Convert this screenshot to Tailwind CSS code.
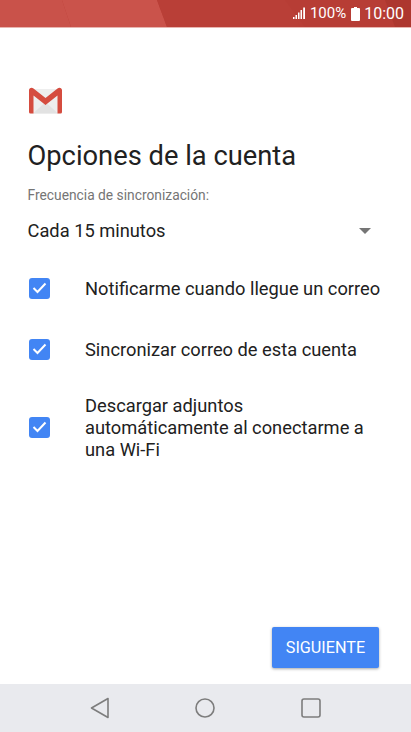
<!DOCTYPE html>
<html lang="es">
  <head>
    <meta charset="UTF-8" />
    <meta name="viewport" content="width=device-width, initial-scale=1.0" />
    <title>Opciones de la cuenta</title>
    <script src="https://cdn.jsdelivr.net/npm/@tailwindcss/browser@4"></script>
  </head>
  <body class="bg-white">
    <div class="w-[411px] h-[732px] flex flex-col overflow-hidden font-['Roboto',sans-serif] text-[#212121]">
      <!-- status bar -->
      <div class="relative h-[28px] shrink-0 bg-[#b93f37] border-b border-[#e8b5b0]">
        <svg class="absolute inset-0" width="411" height="27" viewBox="0 0 411 27">
          <polygon points="0,0 62,0 71,27 0,27" fill="#c9524a" />
          <polygon points="62,0 157,0 167,27 71,27" fill="#ca534b" />
          <polygon points="157,0 290,0 300,27 167,27" fill="#b93f37" />
          <polygon points="285,0 411,0 411,27 305,27" fill="#b73d35" />
          <polygon points="385,0 411,0 411,27 395,27" fill="#ad372f" />
        </svg>
        <div class="relative flex items-center justify-end h-[27px] pr-[7px] text-white text-[15px] leading-none">
          <svg class="mr-[5px]" width="12" height="13" viewBox="0 0 12 13" fill="#fff">
            <rect x="0" y="10" width="1.500" height="2" />
            <rect x="2.500" y="8" width="1.500" height="4" />
            <rect x="5" y="5.500" width="1.500" height="6.500" />
            <rect x="7.500" y="3" width="1.500" height="9" />
            <rect x="10.200" y="0.500" width="1.800" height="11.500" />
          </svg>
          <span>100%</span>
          <svg class="ml-[5px] mr-[4px]" width="9" height="14" viewBox="0 0 9 14" fill="#fff">
            <path d="M3 0h3v1h2a1 1 0 0 1 1 1v11a1 1 0 0 1-1 1H1a1 1 0 0 1-1-1V2a1 1 0 0 1 1-1h2z" />
          </svg>
          <span class="text-[16px]">10:00</span>
        </div>
      </div>

      <!-- content -->
      <main class="flex-1 flex flex-col pl-[28px] pr-[28px] relative">
        <svg class="mt-[59px]" width="35" height="27" viewBox="0 0 35 27">
          <path d="M2 2h31v23a1.500 1.500 0 0 1-1.500 1.500h-28A1.500 1.500 0 0 1 2 25z" fill="#eeeeee" />
          <path d="M5 26.500 L17.500 15 L30 26.500z" fill="#e2e2e2" />
          <path d="M1 3.500C1 1 3.500 0 5.500 1.500L17.500 11 29.500 1.500C31.500 0 34 1 34 3.500V25a1.500 1.500 0 0 1-1.500 1.500H29.500V8.500L17.500 18 5.500 8.500V26.500H2.500A1.500 1.500 0 0 1 1 25z" fill="#d54c3f" />
        </svg>
        <h1 class="mt-[24px] -ml-[0.500px] text-[27.300px] leading-[36px] font-normal">Opciones de la cuenta</h1>
        <p class="mt-[11px] -ml-[0.500px] text-[13.800px] leading-[20px] text-[#757575]">Frecuencia de sincronización:</p>
        <div class="mt-[14px] -ml-[0.500px] h-[24px] flex items-center justify-between pr-[12px]">
          <span class="text-[18.300px] leading-[24px]">Cada 15 minutos</span>
          <span class="w-0 h-0 border-x-[6px] border-x-transparent border-t-[6px] border-t-[#757575]"></span>
        </div>

        <ul class="mt-[33px] flex flex-col text-[18.300px] leading-[22px]">
          <li class="flex items-center">
            <span class="w-[21px] h-[21px] ml-px mr-[35px] shrink-0 rounded-[3px] bg-[#4285f4] flex items-center justify-center">
              <svg width="15" height="12" viewBox="0 0 15 12" fill="none" stroke="#fff" stroke-width="2"><path d="M1.500 6l4 4 8-8.500" /></svg>
            </span>
            <span class="whitespace-nowrap pt-[2px]">Notificarme cuando llegue un correo</span>
          </li>
          <li class="mt-[37px] flex items-center">
            <span class="w-[21px] h-[21px] ml-px mr-[35px] shrink-0 rounded-[3px] bg-[#4285f4] flex items-center justify-center">
              <svg width="15" height="12" viewBox="0 0 15 12" fill="none" stroke="#fff" stroke-width="2"><path d="M1.500 6l4 4 8-8.500" /></svg>
            </span>
            <span class="whitespace-nowrap pt-[2px]">Sincronizar correo de esta cuenta</span>
          </li>
          <li class="mt-[32px] flex items-center">
            <span class="w-[21px] h-[21px] ml-px mr-[35px] shrink-0 rounded-[3px] bg-[#4285f4] flex items-center justify-center">
              <svg width="15" height="12" viewBox="0 0 15 12" fill="none" stroke="#fff" stroke-width="2"><path d="M1.500 6l4 4 8-8.500" /></svg>
            </span>
            <span class="pt-[2px]">Descargar adjuntos automáticamente al conectarme a una Wi-Fi</span>
          </li>
        </ul>

        <div class="mt-auto mb-[16px] flex justify-end pr-[4px]">
          <button class="w-[107px] h-[41px] pt-[2px] rounded-[2px] bg-[#4285f4] text-white text-[16.200px] shadow-[0_1px_3px_rgba(0,0,0,0.35)]">SIGUIENTE</button>
        </div>
      </main>

      <!-- nav bar -->
      <nav class="h-[48px] shrink-0 bg-[#e9eaee] flex items-center justify-center gap-[85.500px] pr-px">
        <svg width="20" height="22" viewBox="0 0 20 22" fill="none" stroke="#7d7d7d" stroke-width="1.600" stroke-linejoin="round"><path d="M18 1.500v19L1.500 11z" /></svg>
        <svg width="20" height="20" viewBox="0 0 20 20" fill="none" stroke="#7d7d7d" stroke-width="1.600"><circle cx="10" cy="10" r="9" /></svg>
        <svg width="20" height="20" viewBox="0 0 20 20" fill="none" stroke="#7d7d7d" stroke-width="1.600"><rect x="1" y="1" width="18" height="18" rx="2" /></svg>
      </nav>
    </div>
  </body>
</html>
